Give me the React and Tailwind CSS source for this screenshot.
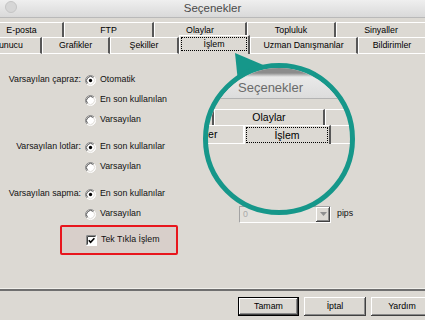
import React from "react";

const Radio = ({ checked }) => (
  <svg width="11" height="11" viewBox="0 0 12 12" className="shrink-0">
    <circle cx="6" cy="6" r="5.5" fill="#ffffff" />
    <path d="M2.11 9.89 A5.5 5.5 0 0 1 9.89 2.11" stroke="#8a8a8a" fill="none" />
    <path d="M9.89 2.11 A5.5 5.5 0 0 1 2.11 9.89" stroke="#ffffff" fill="none" />
    <path d="M2.82 9.18 A4.5 4.5 0 0 1 9.18 2.82" stroke="#404040" fill="none" />
    <path d="M9.18 2.82 A4.5 4.5 0 0 1 2.82 9.18" stroke="#dcd9d3" fill="none" />
    {checked && <circle cx="6" cy="6" r="1.8" fill="#000" />}
  </svg>
);

const Check = () => (
  <svg width="11" height="11" viewBox="0 0 11 11" className="shrink-0">
    <rect x="0" y="0" width="11" height="11" fill="#ffffff" />
    <path d="M0.5 10.5 V0.5 H10.5" stroke="#8a8a8a" fill="none" />
    <path d="M1.5 9.5 V1.5 H9.5" stroke="#404040" fill="none" />
    <path d="M10.5 0.5 V10.5 H0.5" stroke="#ffffff" fill="none" />
    <polyline points="2.8,5.2 4.6,7.2 8.4,3.2" stroke="#000" strokeWidth="1.6" fill="none" />
  </svg>
);

const Tab = ({ w, ml = 0, label, h = "h-[15px]", bottom = false }) => (
  <div
    className={`${h} shrink-0 flex items-center justify-center border-t border-l border-white border-r-2 border-r-[#575757] ${bottom ? "border-b border-b-white" : ""}`}
    style={{ width: w, marginLeft: ml }}
  >
    <span className="leading-none whitespace-nowrap">{label}</span>
  </div>
);

const Row = ({ label, children, className = "" }) => (
  <div className={`flex items-center h-[20px] ${className}`}>
    <div className="w-[81px] shrink-0 text-right whitespace-nowrap">{label}</div>
    <div className="ml-[4px] flex items-center whitespace-nowrap">{children}</div>
  </div>
);

const Btn = ({ w, label, def }) => (
  <div
    className={`h-[19px] shrink-0 flex items-center justify-center bg-[#dcd9d3] ${def ? "border border-black shadow-[inset_-1px_-1px_#404040,inset_1px_1px_#ffffff,inset_-2px_-2px_#8a8a8a]" : "shadow-[inset_-1px_-1px_#404040,inset_1px_1px_#ffffff,inset_-2px_-2px_#8a8a8a]"}`}
    style={{ width: w }}
  >
    {label}
  </div>
);

export default function App() {
  return (
    <div className="relative w-[425px] h-[320px] overflow-hidden bg-[#dcd9d3] text-black text-[8.8px] font-['Liberation_Sans',Arial,sans-serif] flex flex-col">
      {/* title bar */}
      <div className="relative h-[18px] shrink-0 flex items-center justify-center bg-[linear-gradient(#efefef,#d9d9d9)] border-b border-[#b9b9b9]">
        <div className="absolute left-[5px] top-[1px] w-[12px] h-[12px] rounded-full bg-[#d6d6d6] border border-[#c5c5c5]" />
        <span className="text-[11.5px] text-[#4a4a4a] leading-none">Seçenekler</span>
      </div>

      {/* tab row 1 */}
      <div className="mt-[4px] flex h-[15px] shrink-0">
        <Tab w={84} ml={-20} label="E-posta" />
        <Tab w={90} label="FTP" />
        <Tab w={93} label="Olaylar" />
        <Tab w={89} label="Topluluk" />
        <Tab w={91} label="Sinyaller" />
      </div>

      {/* tab row 2 */}
      <div className="flex h-[17px] shrink-0 items-start">
        <Tab w={67} ml={-25} label="Sunucu" h="h-[17px]" bottom />
        <Tab w={68} label="Grafikler" h="h-[17px]" bottom />
        <Tab w={69} label="Şekiller" h="h-[17px]" bottom />
        <div className="relative z-[1] -mt-[2px] h-[19px] w-[71px] shrink-0 bg-[#dcd9d3] border-t border-l border-white border-r-2 border-r-[#575757] pt-[1px] pl-[1px] pr-[1px]">
          <div className="h-[14px] border border-dotted border-black flex items-center justify-center leading-none">İşlem</div>
        </div>
        <Tab w={108} label="Uzman Danışmanlar" h="h-[17px]" bottom />
        <Tab w={69} label="Bildirimler" h="h-[17px]" bottom />
      </div>

      {/* content */}
      <div className="flex-1 pt-[16px] flex flex-col text-[#111]">
        <Row label="Varsayılan çapraz:">
          <Radio checked />
          <span className="ml-[4px]">Otomatik</span>
        </Row>
        <Row label="">
          <Radio />
          <span className="ml-[4px]">En son kullanılan</span>
        </Row>
        <Row label="">
          <Radio />
          <span className="ml-[4px]">Varsayılan</span>
        </Row>
        <Row label="Varsayılan lotlar:" className="mt-[7px]">
          <Radio checked />
          <span className="ml-[4px]">En son kullanılar</span>
        </Row>
        <Row label="">
          <Radio />
          <span className="ml-[4px]">Varsayılan</span>
        </Row>
        <Row label="Varsayılan sapma:" className="mt-[7px]">
          <Radio checked />
          <span className="ml-[4px]">En son kullanılar</span>
        </Row>
        <div className="flex items-center h-[20px]">
          <div className="w-[85px] shrink-0" />
          <div className="w-[154px] shrink-0 flex items-center">
            <Radio />
            <span className="ml-[4px]">Varsayılan</span>
          </div>
          <div className="w-[92px] h-[17px] shrink-0 flex border-t border-l border-[#a3a3a3] border-b border-r border-b-white border-r-white bg-[#e2e0db]">
            <div className="flex-1 pl-[3px] flex items-center text-[#a9a9a9] leading-none">0</div>
            <div className="w-[14px] h-full flex items-center justify-center bg-[#dcd9d3] shadow-[inset_-1px_-1px_#404040,inset_1px_1px_#ffffff,inset_-2px_-2px_#8a8a8a]">
              <svg width="7" height="4" viewBox="0 0 7 4"><polygon points="0,0 7,0 3.5,4" fill="#8f8f8f" /></svg>
            </div>
          </div>
          <span className="ml-[6px]">pips</span>
        </div>
        <div className="mt-[1px] ml-[60px] w-[118px] h-[30px] border-2 border-[#e8161d] rounded-[2px] bg-[#d8cfca] flex items-center pl-[24px]">
          <Check />
          <span className="ml-[4px]">Tek Tıkla İşlem</span>
        </div>
      </div>

      {/* separator */}
      <div className="h-[1px] shrink-0 bg-[#f1f0eb]" />
      <div className="h-[2px] shrink-0 bg-[#6f6f6f]" />

      {/* buttons */}
      <div className="h-[29px] shrink-0 pt-[6px] pl-[238px] flex gap-[5px]">
        <Btn w={61} label="Tamam" def />
        <Btn w={62} label="İptal" />
        <Btn w={62} label="Yardım" />
      </div>

      {/* pointer */}
      <svg className="absolute left-0 top-0 z-[5] pointer-events-none" width="425" height="320" viewBox="0 0 425 320">
        <polygon points="235,53 238,82 268,67" fill="#16978a" />
      </svg>

      {/* magnifier */}
      <div className="absolute left-[203px] top-[63px] z-[6] w-[152px] h-[152px] rounded-full border-[5px] border-[#16978a] overflow-hidden bg-[#dcd9d3] text-[10.5px]">
        <div className="h-[31px] border-b border-[#b3b3b3] bg-[linear-gradient(#8c8c8c_0px,#8c8c8c_5px,#e9e9e9_9px,#dcdcdc_30px)] pl-[30px] pt-[13px]">
          <span className="text-[13px] text-[#6a6a6a] leading-none">Seçenekler</span>
        </div>
        <div className="mt-[10px] flex h-[16px]">
          <div className="w-[6px] shrink-0 border-t border-white border-r-2 border-r-[#575757]" />
          <div className="w-[111px] shrink-0 flex items-center justify-center border-t border-l border-white border-r-2 border-r-[#575757] leading-none">Olaylar</div>
          <div className="flex-1 border-t border-l border-white" />
        </div>
        <div className="flex h-[19px] items-start">
          <div className="w-[35px] h-[19px] shrink-0 flex items-center border-t border-b border-white leading-none whitespace-nowrap">
            <span className="ml-[-25px] shrink-0">Şekiller</span>
          </div>
          <div className="w-[88px] h-[19px] shrink-0 border-t border-l-2 border-white border-r-2 border-r-[#575757] pt-[1px] pl-[1px] pr-[1px]">
            <div className="h-[16px] border border-dotted border-black flex items-center justify-center leading-none">İşlem</div>
          </div>
          <div className="flex-1 h-[19px] border-t border-b border-white" />
        </div>
      </div>
    </div>
  );
}
